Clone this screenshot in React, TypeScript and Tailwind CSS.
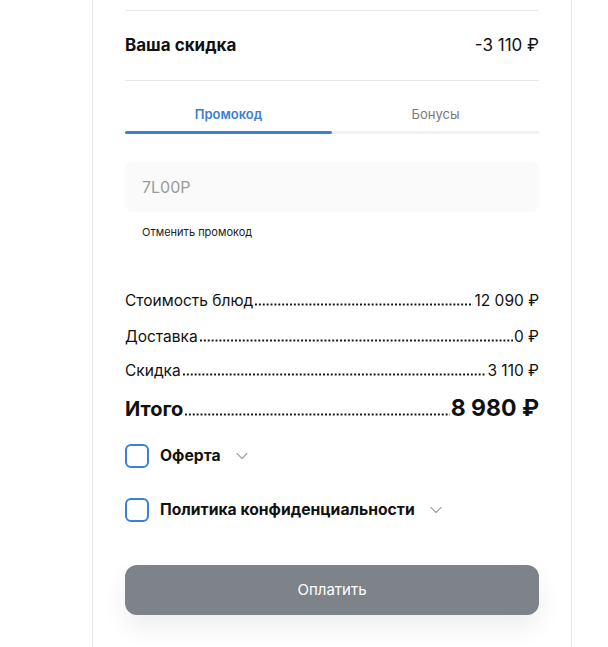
import { ChevronDown } from "lucide-react"

function Row({ label, value, bold, h }: { label: string; value: string; bold?: boolean; h: string }) {
  return (
    <div className={`flex items-baseline ${h}`}>
      <span className={bold ? "text-[20px] font-bold leading-[26px]" : "text-[15.5px] leading-[20px]"}>{label}</span>
      <span className="flex-1 mx-[1px] h-[3px] bg-[radial-gradient(circle,#111_0.9px,transparent_1.3px)] bg-[length:3.9px_3px] bg-repeat-x" />
      <span className={bold ? "text-[23px] font-bold leading-[26px]" : "text-[15.5px] leading-[20px]"}>{value}</span>
    </div>
  )
}

function Check({ label }: { label: string }) {
  return (
    <div className="flex items-center h-[24px]">
      <span className="w-[24px] h-[24px] rounded-[6px] border-2 border-[#3d7ed6] shrink-0" />
      <span className="ml-[11px] text-[15.7px] font-bold text-[#111]">{label}</span>
      <ChevronDown className="ml-[11px] w-[20px] h-[20px] text-[#a0a0a0]" strokeWidth={1.3} />
    </div>
  )
}

export default function App() {
  return (
    <div className="min-h-[647px] bg-white font-['Inter',sans-serif] text-[#111]">
      <div className="ml-[92px] w-[480px] border-x border-[#e6e6e6] px-[32px] pt-[10px] pb-[32px]">
        <div className="border-t border-[#e8e8e8]" />
        <div className="flex items-center justify-between h-[69px]">
          <span className="text-[17px] font-bold">Ваша скидка</span>
          <span className="text-[17px]">-3 110 ₽</span>
        </div>
        <div className="border-t border-[#e8e8e8]" />

        <div className="flex mt-[24px]">
          <div className="flex-1 text-center">
            <div className="text-[13px] font-semibold text-[#3b7fd4] pb-[6px]">Промокод</div>
            <div className="h-[3px] bg-[#3a7fd6] rounded-full" />
          </div>
          <div className="flex-1 text-center">
            <div className="text-[13px] text-[#777] pb-[6px]">Бонусы</div>
            <div className="h-[3px] bg-[#f2f2f2]" />
          </div>
        </div>

        <div className="mt-[28px] h-[50px] rounded-[8px] bg-[#fafafa] flex items-center px-[17px] text-[16px] text-[#9a9a9a]">
          7L00P
        </div>
        <div className="mt-[12px] pl-[17px] text-[11px] text-[#222]">Отменить промокод</div>

        <div className="mt-[51px] flex flex-col">
          <Row label="Стоимость блюд" value="12 090 ₽" h="h-[36px]" />
          <Row label="Доставка" value="0 ₽" h="h-[34px]" />
          <Row label="Скидка" value="3 110 ₽" h="h-[34px]" />
          <Row label="Итого" value="8 980 ₽" bold h="h-[30px]" />
        </div>

        <div className="mt-[19px] flex flex-col gap-[30px]">
          <Check label="Оферта" />
          <Check label="Политика конфиденциальности" />
        </div>

        <button className="mt-[43px] w-full h-[50px] rounded-[12px] bg-[#7e8389] text-white text-[15px] shadow-[0_12px_24px_rgba(0,0,0,0.07)]">
          Оплатить
        </button>
      </div>
    </div>
  )
}
